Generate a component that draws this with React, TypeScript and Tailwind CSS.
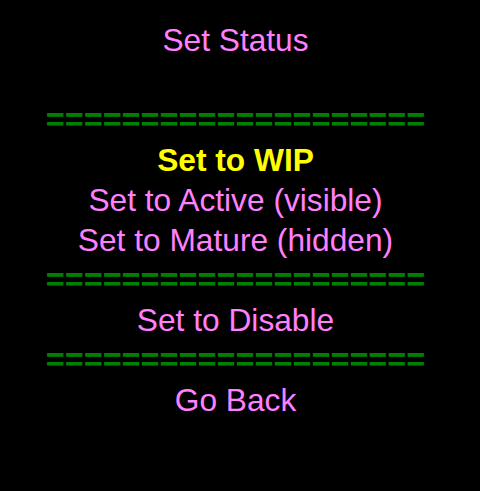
export default function App() {
  const eq = "====================";
  return (
    <div className="min-h-[491px] w-full bg-black">
      <div
        className="flex w-[471px] flex-col items-center pt-[20px] text-center text-[31.7px] leading-[40px] text-[#ff80ff]"
        style={{ fontFamily: '"Liberation Sans", Arial, sans-serif' }}
      >
        <div>Set Status</div>
        <div className="h-[40px]" />
        <div className="text-[32.5px] font-bold text-[#008000]">{eq}</div>
        <div className="font-bold text-[#ffff00]">Set to WIP</div>
        <div>Set to Active (visible)</div>
        <div>Set to Mature (hidden)</div>
        <div className="text-[32.5px] font-bold text-[#008000]">{eq}</div>
        <div>Set to Disable</div>
        <div className="text-[32.5px] font-bold text-[#008000]">{eq}</div>
        <div>Go Back</div>
      </div>
    </div>
  );
}
